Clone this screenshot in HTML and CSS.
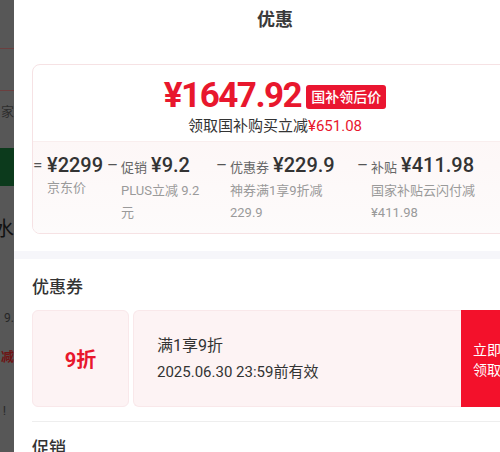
FILE: index.html
```html
<!DOCTYPE html>
<html lang="zh-CN">
<head>
  <meta charset="UTF-8" />
  <meta name="viewport" content="width=device-width, initial-scale=1.0"/>
  <title>优惠</title>
  <link rel="stylesheet" href="styles.css">
</head>
<body>

  <div class="screen">

    <!-- page behind the sheet, dimmed -->
    <div class="underlay">
      <div class="ul-row ul-top"></div>
      <div class="ul-row ul-mid"></div>
      <div class="ul-row ul-text"><span>家</span></div>
      <div class="ul-row ul-green"></div>
      <div class="ul-row ul-big"><span>水</span></div>
      <div class="ul-row ul-num"><span>9.</span></div>
      <div class="ul-row ul-red"><span>减</span></div>
      <div class="ul-row ul-bang"><span>!</span></div>
    </div>

    <div class="sheet">
      <h2 class="sheet-title">优惠</h2>

      <div class="price-card">
        <div class="price-head">
          <div class="final">
            <span class="final-price">¥1647.92</span>
            <span class="tag">国补领后价</span>
          </div>
          <p class="save">领取国补购买立减<em>¥651.08</em></p>
        </div>

        <div class="calc">
          <div class="calc-item">
            <span class="op">=</span>
            <div class="calc-body">
              <div class="calc-top"><b>¥2299</b></div>
              <div class="calc-desc">京东价</div>
            </div>
          </div>
          <div class="calc-item">
            <span class="op">–</span>
            <div class="calc-body">
              <div class="calc-top"><i>促销</i><b>¥9.2</b></div>
              <div class="calc-desc">PLUS立减 9.2元</div>
            </div>
          </div>
          <div class="calc-item">
            <span class="op">–</span>
            <div class="calc-body">
              <div class="calc-top"><i>优惠券</i><b>¥229.9</b></div>
              <div class="calc-desc">神券满1享9折减 229.9</div>
            </div>
          </div>
          <div class="calc-item">
            <span class="op">–</span>
            <div class="calc-body">
              <div class="calc-top"><i>补贴</i><b>¥411.98</b></div>
              <div class="calc-desc">国家补贴云闪付减¥411.98</div>
            </div>
          </div>
        </div>
      </div>

      <div class="band"></div>

      <section class="block">
        <h3 class="block-title">优惠券</h3>
        <div class="coupon">
          <div class="coupon-left">9折</div>
          <div class="coupon-mid">
            <p class="coupon-rule">满1享9折</p>
            <p class="coupon-date">2025.06.30 23:59前有效</p>
          </div>
          <button class="coupon-btn">立即<br>领取</button>
        </div>
      </section>

      <section class="block block-line">
        <h3 class="block-title">促销</h3>
      </section>
    </div>

  </div>

</body>
</html>
```

FILE: styles.css
```css
/* Base Reset */
* {
  margin: 0;
  padding: 0;
  box-sizing: border-box;
  font-family: 'Roboto', 'Noto Sans CJK SC', sans-serif;
}

body {
  width: 500px;
  height: 452px;
  overflow: hidden;
  background: #fff;
}

.screen {
  display: flex;
  width: 536px;
  height: 452px;
}

/* Dimmed page behind */
.underlay {
  width: 14px;
  flex-shrink: 0;
  background: #575757;
  overflow: hidden;
  display: flex;
  flex-direction: column;
}

.ul-row {
  display: flex;
  justify-content: flex-end;
  white-space: nowrap;
}

.ul-top {
  height: 49px;
  border-bottom: 1px solid #6c3f3f;
}

.ul-mid {
  height: 42px;
  border-bottom: 1px solid #6c3f3f;
}

.ul-text {
  height: 57px;
  padding-top: 12px;
  font-size: 13px;
  line-height: 18px;
  color: #2e2e2e;
}

.ul-green {
  height: 38px;
  background: #0c3a1c;
}

.ul-big {
  height: 66px;
  padding-top: 31px;
  font-size: 20px;
  line-height: 24px;
  color: #111;
}

.ul-num {
  height: 64px;
  padding-top: 58px;
  font-size: 12px;
  line-height: 16px;
  color: #262626;
}

.ul-red {
  height: 42px;
  padding-top: 32px;
  font-size: 13px;
  line-height: 18px;
  font-weight: bold;
  color: #6e1414;
}

.ul-bang {
  padding-top: 44px;
  padding-right: 8px;
  font-size: 13px;
  line-height: 18px;
  color: #2a2a2a;
}

/* Sheet */
.sheet {
  width: 522px;
  flex-shrink: 0;
  background: #fff;
}

.sheet-title {
  height: 40px;
  line-height: 40px;
  text-align: center;
  font-size: 18px;
  font-weight: bold;
  color: #3a3a3a;
}

/* Price card */
.price-card {
  margin: 24px 18px 0;
  border: 1px solid #f6e2e4;
  border-radius: 8px;
  overflow: hidden;
}

.price-head {
  padding: 11px 0 6px;
  text-align: center;
}

.final {
  display: flex;
  justify-content: center;
  align-items: center;
  gap: 5px;
}

.final-price {
  font-size: 35px;
  line-height: 40px;
  font-weight: bold;
  letter-spacing: -1.5px;
  color: #e8172d;
}

.tag {
  height: 24px;
  line-height: 24px;
  padding: 0 5px;
  border-radius: 3px;
  background: #ea1530;
  color: #fff;
  font-size: 14px;
  font-weight: 500;
  margin-top: 2px;
}

.save {
  margin-top: 1px;
  font-size: 15px;
  line-height: 18px;
  color: #333;
}

.save em {
  font-style: normal;
  color: #e8172d;
}

/* Price breakdown */
.calc {
  display: grid;
  grid-template-columns: 74px 109px 141px 1fr;
  padding: 11px 0 9px;
  border-top: 1px solid #f9eeee;
  background: linear-gradient(to bottom, #fdf7f7, #fdfbfb);
}

.calc-item {
  display: flex;
  padding-right: 10px;
}

.op {
  width: 14px;
  flex-shrink: 0;
  font-size: 17px;
  line-height: 24px;
  color: #555;
}

.calc-top {
  display: flex;
  align-items: baseline;
  gap: 4px;
  line-height: 24px;
  white-space: nowrap;
}

.calc-top i {
  font-style: normal;
  font-size: 13px;
  color: #666;
}

.calc-top b {
  font-size: 20px;
  font-weight: 500;
  color: #333;
}

.calc-desc {
  font-size: 13px;
  line-height: 22px;
  color: #9a9a9a;
}

/* Grey band */
.band {
  height: 8px;
  margin-top: 17px;
  background: #f6f6fa;
}

/* Sections */
.block {
  margin: 0 18px;
  padding-top: 16px;
}

.block-line {
  margin-top: 14px;
  padding-top: 14px;
  border-top: 1px solid #eee;
}

.block-title {
  font-size: 17px;
  line-height: 24px;
  font-weight: 500;
  color: #333;
}

/* Coupon */
.coupon {
  display: flex;
  gap: 4px;
  height: 97px;
  margin-top: 11px;
}

.coupon-left {
  width: 97px;
  flex-shrink: 0;
  display: flex;
  justify-content: center;
  align-items: center;
  background: #fdf3f4;
  border: 1px solid #f9e8ea;
  border-radius: 6px;
  color: #e8172d;
  font-size: 20px;
  font-weight: bold;
}

.coupon-mid {
  flex: 1;
  display: flex;
  flex-direction: column;
  justify-content: center;
  padding-left: 23px;
  background: #fdf3f4;
  border: 1px solid #f9e8ea;
  border-right: none;
  border-radius: 6px 0 0 6px;
  color: #333;
}

.coupon-rule {
  font-size: 16px;
  line-height: 26px;
}

.coupon-date {
  font-size: 15px;
  line-height: 26px;
}

.coupon-btn {
  width: 57px;
  flex-shrink: 0;
  margin-left: -4px;
  border: none;
  background: #f3112b;
  color: #fff;
  font-size: 14px;
  line-height: 20px;
  text-align: left;
  padding-left: 12px;
  padding-top: 2px;
  cursor: pointer;
}
```
